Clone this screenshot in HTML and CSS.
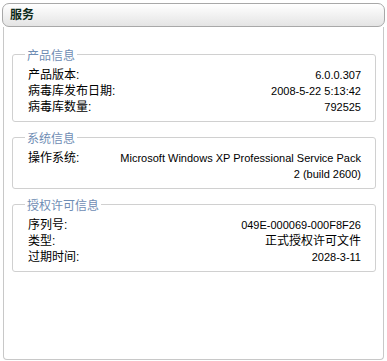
FILE: index.html
```html
<!DOCTYPE html>
<html>
<head>
  <title>服务</title>
  <link rel="stylesheet" href="styles.css">
</head>
<body>
  <div class="panel">
    <div class="panel-head">服务</div>
    <div class="panel-body">
      <fieldset class="group">
        <legend>产品信息</legend>
        <div class="row"><span class="label">产品版本:</span><span class="value">6.0.0.307</span></div>
        <div class="row"><span class="label">病毒库发布日期:</span><span class="value">2008-5-22 5:13:42</span></div>
        <div class="row"><span class="label">病毒库数量:</span><span class="value">792525</span></div>
      </fieldset>
      <fieldset class="group">
        <legend>系统信息</legend>
        <div class="row"><span class="label">操作系统:</span><span class="value">Microsoft Windows XP Professional Service Pack 2 (build 2600)</span></div>
      </fieldset>
      <fieldset class="group">
        <legend>授权许可信息</legend>
        <div class="row"><span class="label">序列号:</span><span class="value">049E-000069-000F8F26</span></div>
        <div class="row"><span class="label">类型:</span><span class="value cjk">正式授权许可文件</span></div>
        <div class="row"><span class="label">过期时间:</span><span class="value">2028-3-11</span></div>
      </fieldset>
    </div>
  </div>
</body>
</html>
```

FILE: styles.css
```css
* {
  box-sizing: border-box;
}

body {
  margin: 0;
  padding: 3px 2px 0 2px;
  background: #ffffff;
  font-family: "Liberation Sans", "Noto Sans CJK SC", sans-serif;
  font-size: 12px;
  color: #000000;
}

.panel {
  width: 383px;
}

.panel-head {
  height: 24px;
  line-height: 22px;
  padding-left: 7px;
  border: 1px solid #a8a8a8;
  border-radius: 7px;
  background: linear-gradient(#ffffff, #e4e4e4);
  font-weight: bold;
  font-size: 12px;
  color: #0d2a1a;
}

.panel-body {
  height: 333px;
  margin: 0 1px;
  border: 1px solid #c8c8c8;
  border-top: none;
  border-radius: 0 0 4px 4px;
  padding: 19px 7px 0 8px;
}

.group {
  margin: 0 0 7px 0;
  padding: 4px 14px 6px 15px;
  border: 1px solid #d0d0d0;
  border-radius: 3px;
}

.group legend {
  padding: 0 2px;
  margin-left: -3px;
  color: #6f8db4;
  font-size: 12px;
}

.row {
  display: grid;
  grid-template-columns: 84px 1fr;
  align-items: start;
}

.label {
  white-space: nowrap;
  height: 16px;
  line-height: 16px;
}

.value {
  text-align: right;
  font-size: 11px;
  line-height: 16px;
}

.value.cjk {
  font-size: 12px;
  height: 16px;
}
```
